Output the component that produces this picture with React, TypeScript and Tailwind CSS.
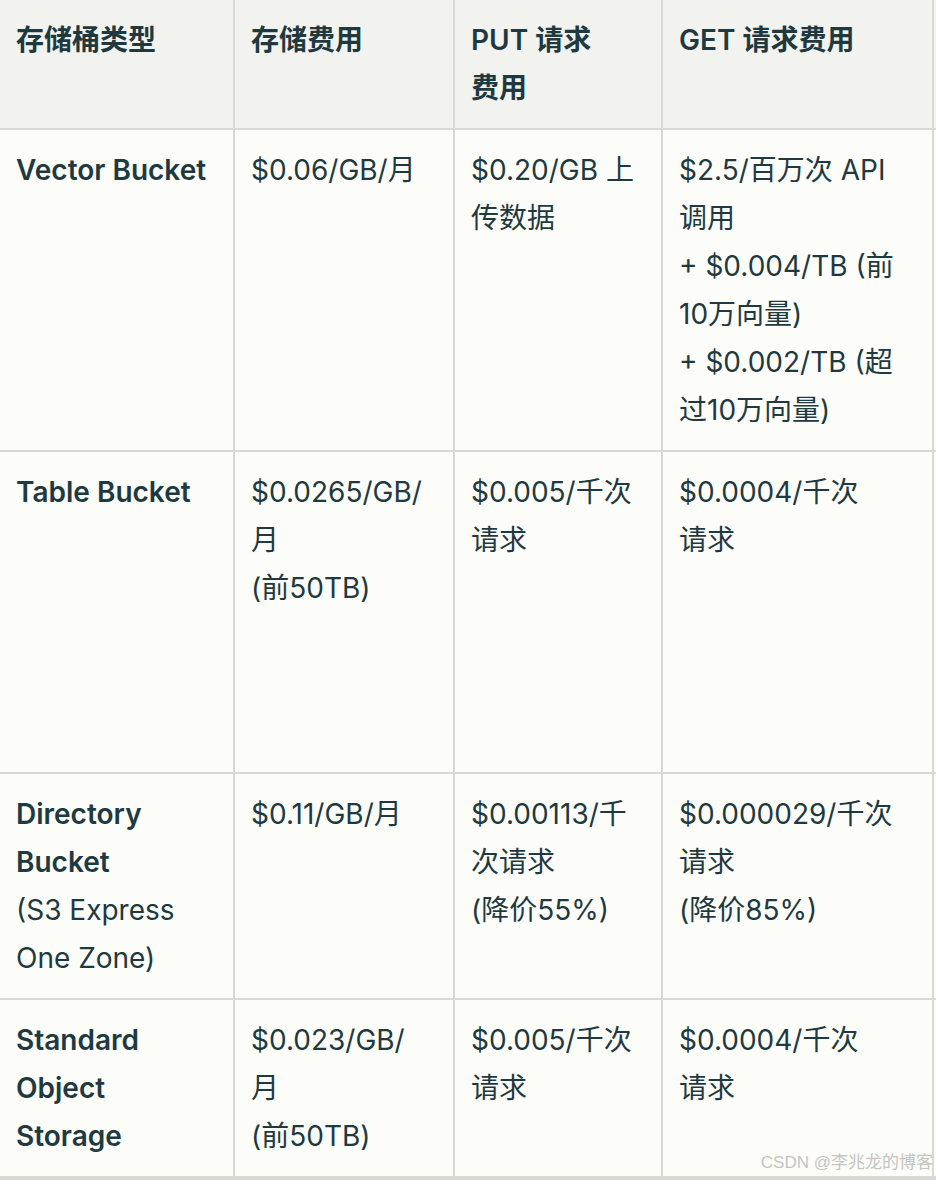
import React from "react";

type Cell = { lines: { t: string; b?: boolean }[] };

const font = {
  fontFamily: '"Inter", "Noto Sans CJK SC", sans-serif',
};

function L(...xs: string[]) {
  return xs.map((t) => ({ t }));
}
function B(...xs: string[]) {
  return xs.map((t) => ({ t, b: true }));
}

const header: Cell[] = [
  { lines: B("存储桶类型") },
  { lines: B("存储费用") },
  { lines: B("PUT 请求", "费用") },
  { lines: B("GET 请求费用") },
  { lines: [] },
];

const rows: Cell[][] = [
  [
    { lines: B("Vector Bucket") },
    { lines: L("$0.06/GB/月") },
    { lines: L("$0.20/GB 上", "传数据") },
    {
      lines: L(
        "$2.5/百万次 API",
        "调用",
        "+ $0.004/TB (前",
        "10万向量)",
        "+ $0.002/TB (超",
        "过10万向量)"
      ),
    },
    { lines: [] },
  ],
  [
    { lines: B("Table Bucket") },
    { lines: L("$0.0265/GB/", "月", "(前50TB)") },
    { lines: L("$0.005/千次", "请求") },
    { lines: L("$0.0004/千次", "请求") },
    { lines: [] },
  ],
  [
    { lines: [...B("Directory", "Bucket"), ...L("(S3 Express", "One Zone)")] },
    { lines: L("$0.11/GB/月") },
    { lines: L("$0.00113/千", "次请求", "(降价55%)") },
    { lines: L("$0.000029/千次", "请求", "(降价85%)") },
    { lines: [] },
  ],
  [
    { lines: B("Standard", "Object", "Storage") },
    { lines: L("$0.023/GB/", "月", "(前50TB)") },
    { lines: L("$0.005/千次", "请求") },
    { lines: L("$0.0004/千次", "请求") },
    { lines: [] },
  ],
];

function CellView({ cell, head }: { cell: Cell; head?: boolean }) {
  return (
    <div
      className={`${head ? "bg-[#f2f2ee]" : "bg-[#fcfcf9]"} px-4 py-4 overflow-hidden`}
    >
      {cell.lines.map((l, i) => (
        <div
          key={i}
          className={`whitespace-nowrap text-[28px] leading-[48px] text-[#1e3a40] ${
            l.b || head ? "font-semibold" : "font-normal"
          }`}
        >
          {l.t}
        </div>
      ))}
    </div>
  );
}

export default function App() {
  return (
    <div
      className="relative w-[936px] h-[1180px] overflow-hidden bg-[#d9d9d3]"
      style={font}
    >
      <div className="grid grid-cols-[233px_218px_206px_269px_1fr] grid-rows-[128px_320px_320px_224px_176px] gap-[2px]">
        {header.map((c, i) => (
          <CellView key={"h" + i} cell={c} head />
        ))}
        {rows.map((r, ri) =>
          r.map((c, ci) => <CellView key={ri + "-" + ci} cell={c} />)
        )}
      </div>
      <div
        className="absolute right-[3px] bottom-[6px] text-[17px] leading-[22px] text-[#c4c4c4] whitespace-nowrap"
        style={{ fontFamily: '"Liberation Sans", "Noto Sans CJK SC", sans-serif' }}
      >
        CSDN @李兆龙的博客
      </div>
    </div>
  );
}
